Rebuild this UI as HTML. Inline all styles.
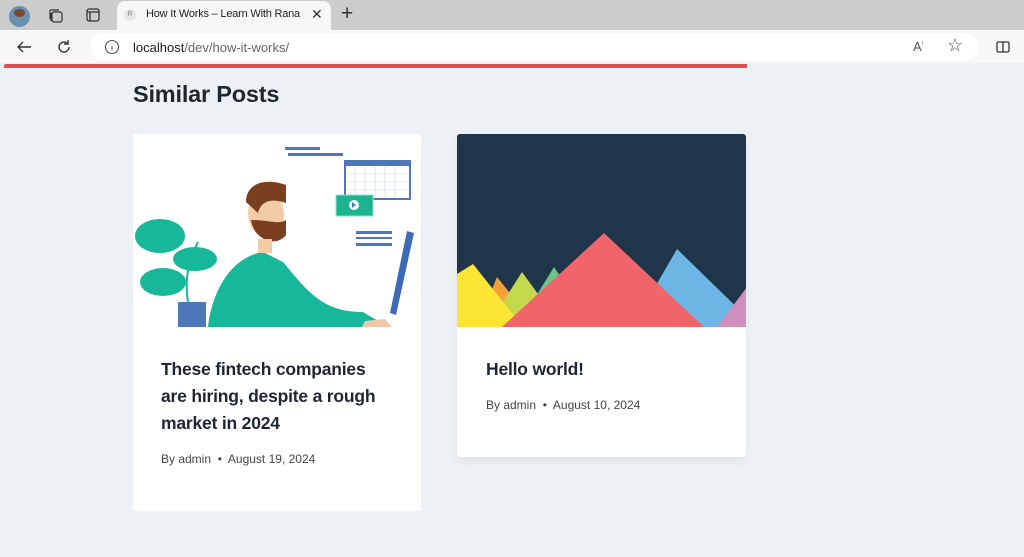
<!DOCTYPE html>
<html><head><meta charset="utf-8"><style>
*{margin:0;padding:0;box-sizing:border-box}
body{width:1024px;height:557px;overflow:hidden;background:#edf1f5;font-family:"Liberation Sans",sans-serif;position:relative}
.abs{position:absolute}
.tabbar{left:0;top:0;width:1024px;height:30px;background:#cccccc}
.tab{left:117px;top:1px;width:214px;height:30px;background:#f7f7f7;border-radius:8px 8px 0 0}
.addr{left:0;top:30px;width:1024px;height:33px;background:#f7f7f7}
.url{left:90px;top:33px;width:888px;height:28px;background:#fff;border-radius:14px}
.card{background:#fff;border-radius:3px}
h3{font-size:17.5px;line-height:27px;color:#1f2633;font-weight:bold;letter-spacing:-0.2px}
.meta{font-size:12px;color:#444}
</style></head><body>
<div class="abs tabbar"></div>
<div class="abs" style="left:9px;top:6px;width:21px;height:21px;border-radius:50%;background:#6b8fb0"></div>
<div class="abs" style="left:14px;top:9px;width:11px;height:8px;border-radius:50%;background:#7a4a30"></div>
<svg class="abs" style="left:47px;top:7px" width="18" height="18" viewBox="0 0 18 18" fill="none" stroke="#333" stroke-width="1.2"><rect x="5" y="5" width="10" height="10" rx="2"/><path d="M3 12V4a1 1 0 0 1 1-1h8"/><path d="M4 14V6"/></svg>
<svg class="abs" style="left:85px;top:7px" width="16" height="16" viewBox="0 0 16 16" fill="none" stroke="#333" stroke-width="1.3"><rect x="2" y="2" width="12" height="12" rx="2"/><path d="M2 5h12M5 5v9"/></svg>
<div class="abs tab"></div>
<div class="abs" style="left:124px;top:9px;width:12px;height:12px;border-radius:50%;background:#e6e6e6;font-size:7px;color:#888;text-align:center;line-height:12px">R</div>
<div class="abs" style="left:146px;top:8px;font-size:11px;color:#222;letter-spacing:-0.2px">How It Works – Learn With Rana</div>
<div class="abs" style="left:311px;top:6px;font-size:14px;color:#333">✕</div>
<div class="abs" style="left:341px;top:2px;font-size:21px;color:#333;font-weight:300">+</div>
<div class="abs addr"></div>
<div class="abs url"></div>
<svg class="abs" style="left:15px;top:38px" width="18" height="18" viewBox="0 0 18 18" fill="none" stroke="#333" stroke-width="1.4"><path d="M16 9H3M8 4L3 9l5 5"/></svg>
<svg class="abs" style="left:55px;top:38px" width="18" height="18" viewBox="0 0 18 18" fill="none" stroke="#333" stroke-width="1.4"><path d="M14 9a5 5 0 1 1-2-4"/><path d="M13 2v4h-4"/></svg>
<svg class="abs" style="left:104px;top:39px" width="16" height="16" viewBox="0 0 16 16" fill="none" stroke="#555" stroke-width="1.1"><circle cx="8" cy="8" r="6.5"/><path d="M8 7v4M8 5v.5"/></svg>
<div class="abs" style="left:133px;top:40px;font-size:13px;color:#1a1a1a">localhost<span style="color:#666">/dev/how-it-works/</span></div>
<div class="abs" style="left:913px;top:39px;font-size:13px;color:#555">A<span style="font-size:8px;vertical-align:top">ᵎ</span></div>
<div class="abs" style="left:947px;top:35px;font-size:18px;color:#555">☆</div>
<svg class="abs" style="left:995px;top:39px" width="16" height="16" viewBox="0 0 16 16" fill="none" stroke="#333" stroke-width="1.3"><rect x="2" y="3" width="12" height="10" rx="1.5"/><path d="M8 3v10"/></svg>
<div class="abs" style="left:4px;top:64px;width:743px;height:4px;background:#de5050;border-radius:2px 0 0 0"></div>
<div class="abs" style="left:133px;top:81px;font-size:23.5px;font-weight:bold;color:#1f2633;letter-spacing:-0.2px">Similar Posts</div>

<div class="abs card" style="left:133px;top:134px;width:288px;height:377px;overflow:hidden">
<svg width="288" height="193" viewBox="0 0 288 193">
<rect x="152" y="13" width="35" height="3" fill="#4e77b8"/><rect x="155" y="19" width="55" height="3" fill="#4e77b8"/>
<rect x="212" y="27" width="65" height="38" fill="#fff" stroke="#4e77b8" stroke-width="2"/><rect x="212" y="27" width="65" height="5" fill="#4e77b8"/>
<g stroke="#c8d4e8" stroke-width="0.6"><path d="M214 40h62M214 48h62M214 56h62M222 32v32M232 32v32M242 32v32M252 32v32M262 32v32"/></g>
<rect x="203" y="61" width="37" height="21" fill="#1eb38f" stroke="#8fe0c8" stroke-width="1"/><circle cx="221" cy="71" r="5" fill="#fff"/><path d="M219 68l4 3-4 3z" fill="#4e77b8"/>
<rect x="223" y="97" width="36" height="3" fill="#4e77b8"/><rect x="223" y="103" width="36" height="2" fill="#4e77b8"/><rect x="223" y="109" width="36" height="3" fill="#4e77b8"/>
<path d="M274 97l7 2-18 82-6-2z" fill="#3d6bb8"/>
<path d="M45 168h28v25H45z" fill="#4e77b8"/>
<g fill="#16b899"><ellipse cx="27" cy="102" rx="25" ry="17"/><ellipse cx="62" cy="125" rx="22" ry="12"/><ellipse cx="30" cy="148" rx="23" ry="14"/></g>
<path d="M55 168c-5-30 5-50 10-60" stroke="#16b899" stroke-width="2" fill="none"/>
<path d="M75 193c5-40 25-70 55-75l20 10c25 30 40 50 80 50l25 15z" fill="#16b899"/>
<path d="M232 187l20-2 7 8h-30z" fill="#f0c8a8"/>
<ellipse cx="133" cy="80" rx="18" ry="23" fill="#f4cba7"/>
<path d="M118 86c3 20 25 28 35 15l0-15c-8 5-15 0-35 0z" fill="#7a3f1e"/>
<path d="M113 68c0-18 18-25 40-17l0 18c-15-5-25-2-28 10z" fill="#7a3f1e"/>
<rect x="125" y="105" width="14" height="14" fill="#f4cba7"/>
</svg>
<div style="padding:24px 28px 0"><h3>These fintech companies are hiring, despite a rough market in 2024</h3>
<div class="meta" style="margin-top:15px">By admin &nbsp;•&nbsp; August 19, 2024</div></div>
</div>

<div class="abs card" style="left:457px;top:134px;width:289px;height:323px;overflow:hidden;box-shadow:0 4px 10px rgba(0,0,0,.06)">
<svg width="289" height="193" viewBox="0 0 289 193">
<rect width="289" height="193" fill="#1f3549"/>
<path d="M150 193l42-47 18 16-30 31z" fill="#9a8ec6"/>
<path d="M175 193l45-78 80 78z" fill="#6db5e5"/>
<path d="M260 193l30-40v40z" fill="#d28fbd"/>
<path d="M20 193l20-50 40 50z" fill="#f5a03a"/>
<path d="M60 193l37-60 40 60z" fill="#6cc587"/>
<path d="M30 193l35-55 40 55z" fill="#c3d84a"/>
<path d="M0 193V140l16-10 50 63z" fill="#fde534"/>
<path d="M45 193l102-94 100 94z" fill="#f0646a"/>
</svg>
<div style="padding:24px 29px 0"><h3>Hello world!</h3>
<div class="meta" style="margin-top:15px">By admin &nbsp;•&nbsp; August 10, 2024</div></div>
</div>
</body></html>
